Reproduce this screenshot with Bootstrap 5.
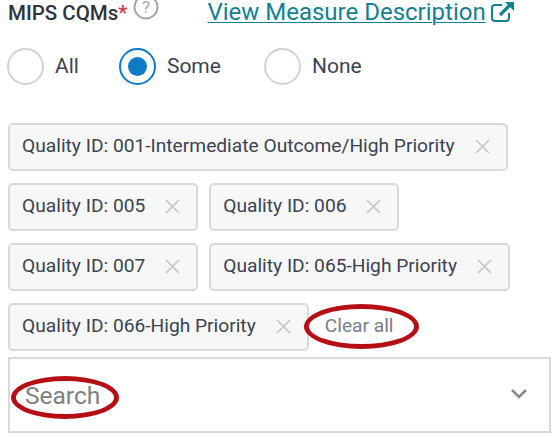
<!DOCTYPE html>
<html lang="en">
<head>
<meta charset="UTF-8">
<title>MIPS CQMs</title>
<link href="https://cdn.jsdelivr.net/npm/bootstrap@5.3.0/dist/css/bootstrap.min.css" rel="stylesheet">
<style>
    body { font-family: Roboto, "Liberation Sans", sans-serif; color: #3a4352; background: #fff; overflow: hidden; }
    .cqm-wrap { width: 555px; height: 437px; padding: 0 4px 0 8px; position: relative; }
    .cqm-head { height: 24px; }
    .cqm-title { font-size: 20.5px; font-weight: 500; color: #2c3440; line-height: 24px; padding-top: 1px; }
    .cqm-req { color: #d9333f; }
    .cqm-help { margin-left: 6px; flex: none; }
    .cqm-link { margin-left: 48px; font-size: 24px; line-height: 24px; color: #14808f; text-decoration: underline; text-underline-offset: 2px; text-decoration-thickness: 1px; white-space: nowrap; }
    .cqm-radios { margin: 24px 0 0 -1px; height: 37px; font-size: 21px; gap: 40px; }
    .cqm-radio { width: 37px; height: 37px; border: 2px solid #d2d2d2; border-radius: 50%; flex: none; }
    .cqm-radio.on { border-color: #0d7cc4; padding: 7px; }
    .cqm-radio.on span { display: block; width: 19px; height: 19px; border-radius: 50%; background: #0d7cc4; }
    .cqm-opt { gap: 11px; }
    .cqm-opt-some { margin-right: 3px; }
    .cqm-chips { margin-top: 38px; gap: 12px; font-size: 19.2px; }
    .cqm-line { gap: 11px; }
    .cqm-chip { height: 48px; padding: 0 16px 2px 12px; background: #f7f7f7; border: 2px solid #d9d9d9; border-radius: 5px; gap: 20px; color: #3a4352; white-space: nowrap; }
    .cqm-clear { color: #77808a; margin: 0 0 2px 5px; }
    .cqm-select { margin-top: 6px; height: 76px; border: 2px solid #d9d9d9; padding: 0 21px 0 15px; }
    .cqm-search { font-size: 24.5px; color: #808080; padding-top: 3px; }
    .cqm-chevron { margin-bottom: 3px; }
    .cqm-ring { position: absolute; border: 5px solid #b30f14; border-radius: 50%; }
    .ring-clear { left: 304px; top: 304px; width: 115px; height: 45px; }
    .ring-search { left: 11px; top: 376px; width: 108px; height: 43px; }
</style>
</head>
<body>
<div class="cqm-wrap">
    <div class="cqm-head d-flex align-items-start">
        <span class="cqm-title">MIPS CQMs<span class="cqm-req">*</span></span>
        <svg class="cqm-help" width="26" height="20" viewBox="0 6 26 20" fill="none">
            <circle cx="13" cy="13" r="11.5" stroke="#a3a7ad" stroke-width="2"/>
            <text x="13" y="19" text-anchor="middle" font-size="17" font-family="Roboto" fill="#a3a7ad">?</text>
        </svg>
        <a class="cqm-link" href="#">View Measure Description</a>
        <svg class="ms-1" width="26" height="24" viewBox="0 0 26 24" fill="none" stroke="#14808f">
            <path d="M12 5H5a3 3 0 0 0-3 3v10a3 3 0 0 0 3 3h11a3 3 0 0 0 3-3v-5" stroke-width="2"/>
            <path d="M10 15L21 4" stroke-width="3.2"/>
            <path d="M15 2h9v9z" fill="#14808f" stroke="none"/>
        </svg>
    </div>
    <div class="cqm-radios d-flex align-items-center">
        <div class="cqm-opt d-flex align-items-center"><span class="cqm-radio"></span><span>All</span></div>
        <div class="cqm-opt cqm-opt-some d-flex align-items-center"><span class="cqm-radio on"><span></span></span><span>Some</span></div>
        <div class="cqm-opt d-flex align-items-center"><span class="cqm-radio"></span><span>None</span></div>
    </div>
    <div class="cqm-chips d-flex flex-column">
        <div class="cqm-line d-flex align-items-center">
            <div class="cqm-chip d-flex align-items-center"><span>Quality ID: 001-Intermediate Outcome/High Priority</span><svg width="15" height="15" viewBox="0 0 15 15" stroke="#c4c4c4" stroke-width="1.6"><path d="M1 1l13 13M14 1L1 14"/></svg></div>
        </div>
        <div class="cqm-line d-flex align-items-center">
            <div class="cqm-chip d-flex align-items-center"><span>Quality ID: 005</span><svg width="15" height="15" viewBox="0 0 15 15" stroke="#c4c4c4" stroke-width="1.6"><path d="M1 1l13 13M14 1L1 14"/></svg></div>
            <div class="cqm-chip d-flex align-items-center"><span>Quality ID: 006</span><svg width="15" height="15" viewBox="0 0 15 15" stroke="#c4c4c4" stroke-width="1.6"><path d="M1 1l13 13M14 1L1 14"/></svg></div>
        </div>
        <div class="cqm-line d-flex align-items-center">
            <div class="cqm-chip d-flex align-items-center"><span>Quality ID: 007</span><svg width="15" height="15" viewBox="0 0 15 15" stroke="#c4c4c4" stroke-width="1.6"><path d="M1 1l13 13M14 1L1 14"/></svg></div>
            <div class="cqm-chip d-flex align-items-center"><span>Quality ID: 065-High Priority</span><svg width="15" height="15" viewBox="0 0 15 15" stroke="#c4c4c4" stroke-width="1.6"><path d="M1 1l13 13M14 1L1 14"/></svg></div>
        </div>
        <div class="cqm-line d-flex align-items-center">
            <div class="cqm-chip d-flex align-items-center"><span>Quality ID: 066-High Priority</span><svg width="15" height="15" viewBox="0 0 15 15" stroke="#c4c4c4" stroke-width="1.6"><path d="M1 1l13 13M14 1L1 14"/></svg></div>
            <span class="cqm-clear">Clear all</span>
        </div>
    </div>
    <div class="cqm-select d-flex align-items-center justify-content-between">
        <span class="cqm-search">Search</span>
        <svg class="cqm-chevron" width="18" height="12" viewBox="0 0 18 12" fill="none" stroke="#8a8a8a" stroke-width="2.6"><path d="M2 2l7 7 7-7"/></svg>
    </div>
    <div class="cqm-ring ring-clear"></div>
    <div class="cqm-ring ring-search"></div>
</div>
<script src="https://cdn.jsdelivr.net/npm/bootstrap@5.3.0/dist/js/bootstrap.bundle.min.js"></script>
</body>
</html>
